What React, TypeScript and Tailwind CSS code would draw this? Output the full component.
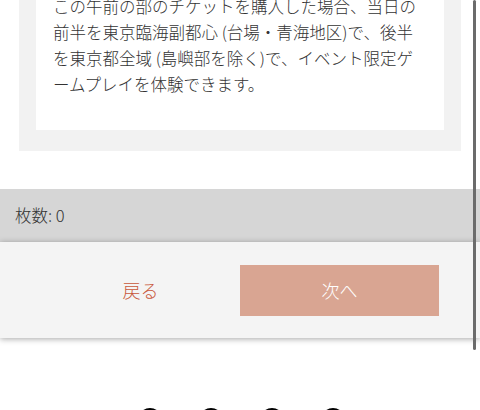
import React from "react";

export default function App() {
  return (
    <div
      lang="ja"
      className="relative w-[480px] h-[410px] overflow-hidden bg-white text-[#333333]"
      style={{ fontFamily: '"Noto Sans CJK JP", "Noto Sans", sans-serif' }}
    >
      <div className="-mt-[7px] px-[19px]">
        <div className="bg-[#f2f2f2] px-[17px] pb-[21px]">
          <div className="bg-white pl-[17px] pr-[20px] pb-[33px]">
            <p className="text-[16.5px] leading-[26px] font-light">
              この午前の部のチケットを購入した場合、当日の前半を東京臨海副都心 (台場・青海地区)で、後半を東京都全域 (島嶼部を除く)で、イベント限定ゲームプレイを体験できます。
            </p>
          </div>
        </div>
      </div>

      <div className="mt-[38px] h-[53px] bg-[#d6d6d6] flex items-center pl-[15px] text-[16.5px] font-light">
        枚数: 0
      </div>

      <div className="relative h-[96px] bg-[#f4f4f4] shadow-[0_1px_6px_rgba(0,0,0,0.35)] flex items-center px-[41px]">
        <button className="w-[199px] h-[51px] text-[#c8573a] text-[18px] font-light">戻る</button>
        <button className="w-[199px] h-[51px] bg-[#d9a592] text-white text-[18px] font-light">次へ</button>
      </div>

      <div className="flex justify-center gap-[37px] mt-[70px] pl-[2px]">
        <div className="w-[24px] h-[24px] rounded-full bg-black" />
        <div className="w-[24px] h-[24px] rounded-full bg-black" />
        <div className="w-[24px] h-[24px] rounded-full bg-black" />
        <div className="w-[24px] h-[24px] rounded-full bg-black" />
      </div>

      <div className="absolute left-[473px] top-0 w-[3px] h-[350px] rounded-full bg-[#6b6b6b]" />
    </div>
  );
}
